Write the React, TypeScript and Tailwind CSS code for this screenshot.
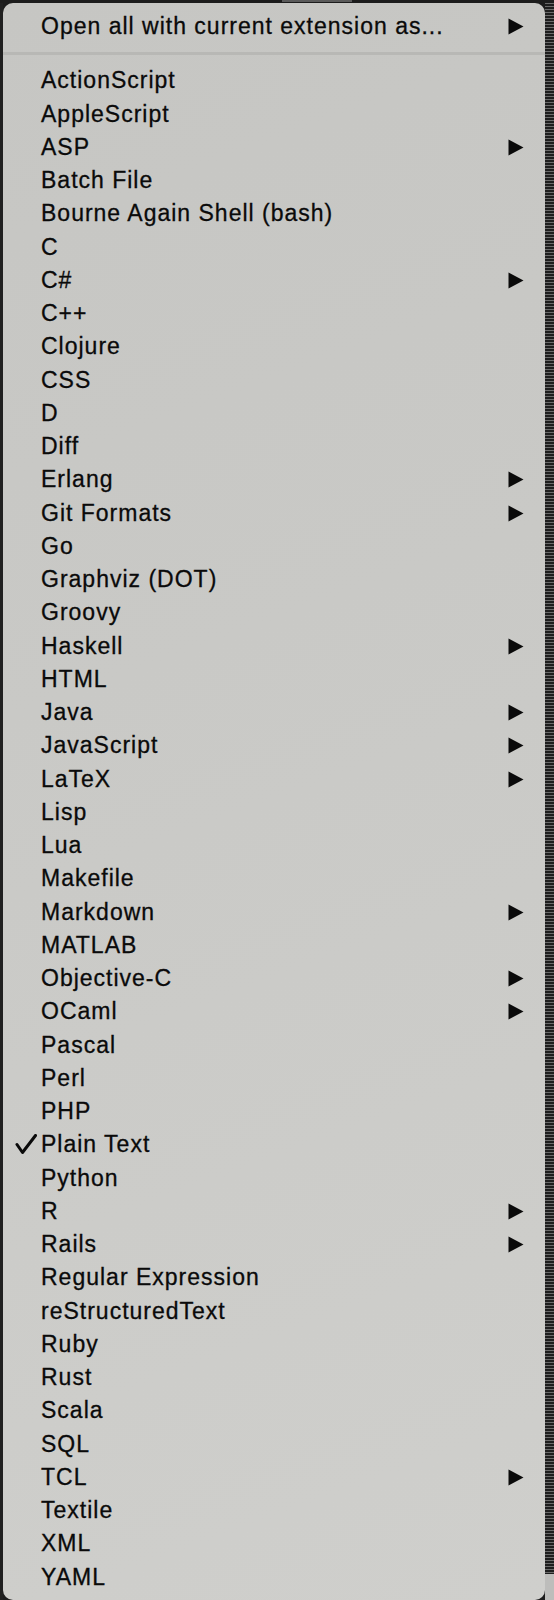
import React from "react";

type Item = { label: string; sub?: boolean; checked?: boolean };

const items: Item[] = [
  { label: "ActionScript" },
  { label: "AppleScript" },
  { label: "ASP", sub: true },
  { label: "Batch File" },
  { label: "Bourne Again Shell (bash)" },
  { label: "C" },
  { label: "C#", sub: true },
  { label: "C++" },
  { label: "Clojure" },
  { label: "CSS" },
  { label: "D" },
  { label: "Diff" },
  { label: "Erlang", sub: true },
  { label: "Git Formats", sub: true },
  { label: "Go" },
  { label: "Graphviz (DOT)" },
  { label: "Groovy" },
  { label: "Haskell", sub: true },
  { label: "HTML" },
  { label: "Java", sub: true },
  { label: "JavaScript", sub: true },
  { label: "LaTeX", sub: true },
  { label: "Lisp" },
  { label: "Lua" },
  { label: "Makefile" },
  { label: "Markdown", sub: true },
  { label: "MATLAB" },
  { label: "Objective-C", sub: true },
  { label: "OCaml", sub: true },
  { label: "Pascal" },
  { label: "Perl" },
  { label: "PHP" },
  { label: "Plain Text", checked: true },
  { label: "Python" },
  { label: "R", sub: true },
  { label: "Rails", sub: true },
  { label: "Regular Expression" },
  { label: "reStructuredText" },
  { label: "Ruby" },
  { label: "Rust" },
  { label: "Scala" },
  { label: "SQL" },
  { label: "TCL", sub: true },
  { label: "Textile" },
  { label: "XML" },
  { label: "YAML" },
];

function Arrow() {
  return (
    <svg width="16" height="17" viewBox="0 0 16 17" className="block">
      <polygon points="0.5,0.5 15.5,8.5 0.5,16.5" fill="#0a0a0a" />
    </svg>
  );
}

function Check() {
  return (
    <svg width="22" height="21" viewBox="0 0 22 21" className="block">
      <path
        d="M2 10.5 L7.5 18.5 L20.5 1.5"
        fill="none"
        stroke="#0a0a0a"
        strokeWidth="3"
        strokeLinecap="round"
        strokeLinejoin="round"
      />
    </svg>
  );
}

function Row({ item }: { item: Item }) {
  return (
    <div className="relative flex h-[33.25px] items-center pl-[38px] pr-[21px]">
      {item.checked && (
        <div className="absolute left-[12px] top-[6px]">
          <Check />
        </div>
      )}
      <span className="flex-1 leading-none whitespace-nowrap">{item.label}</span>
      {item.sub && <Arrow />}
    </div>
  );
}

export default function App() {
  return (
    <div className="flex h-[1600px] w-[554px] flex-col overflow-hidden bg-[#1c1c1c] font-['Liberation_Sans',Arial,sans-serif] text-[23px] tracking-[1px] text-[#0a0a0a] [-webkit-text-stroke:0.3px_#0a0a0a]">
      <div className="flex h-[3px] shrink-0 justify-center">
        <div className="ml-[80px] h-[2px] w-[70px] bg-[#5a5a5a]" />
      </div>
      <div className="flex flex-1">
        <div className="w-[3px] shrink-0 bg-[#202020]" />
        <div className="flex w-[542px] shrink-0 flex-col rounded-[10px] bg-[linear-gradient(160deg,#c6c6c3_0%,#c9c9c6_40%,#cfcfcc_100%)] pt-[7px] pb-[3px]">
          <div className="flex h-[33.25px] items-center pl-[38px] pr-[21px]">
            <span className="flex-1 leading-none whitespace-nowrap">
              Open all with current extension as...
            </span>
            <Arrow />
          </div>
          <div className="flex h-[21px] items-center">
            <div className="h-[3px] w-full bg-[#b8b8b5]" />
          </div>
          {items.map((it) => (
            <Row key={it.label} item={it} />
          ))}
        </div>
        <div className="flex w-[9px] shrink-0 flex-col">
          <div className="flex-1 bg-[repeating-linear-gradient(180deg,#6a6a6a_0px,#6a6a6a_1px,#1e1e1e_1px,#1e1e1e_3px)]" />
          <div className="h-[26px] bg-[#bdbdbb]" />
        </div>
      </div>
    </div>
  );
}
